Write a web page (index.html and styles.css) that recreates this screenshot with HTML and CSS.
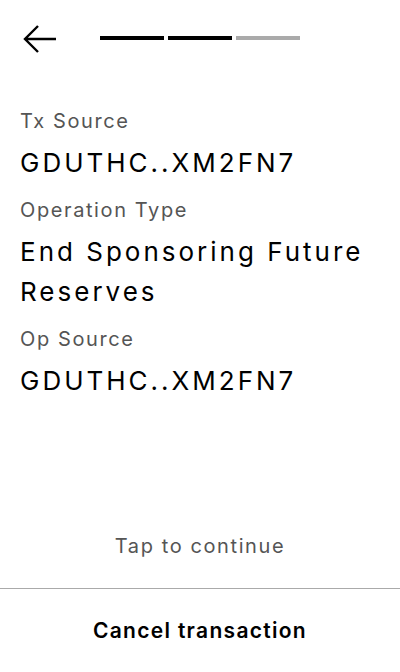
FILE: index.html
```html
<!DOCTYPE html>
<html>
<head>
<meta charset="utf-8">
<link rel="stylesheet" href="styles.css">
</head>
<body>
<div class="screen">
  <header class="header">
    <svg class="back" width="34" height="30" viewBox="0 0 34 30">
      <path d="M33 14H3M15 1L2 14L15 27" fill="none" stroke="#000" stroke-width="2.4"/>
    </svg>
    <div class="progress">
      <span class="seg on"></span>
      <span class="seg on"></span>
      <span class="seg"></span>
    </div>
  </header>
  <main class="content">
    <div class="label">Tx Source</div>
    <div class="value">GDUTHC..XM2FN7</div>
    <div class="label">Operation Type</div>
    <div class="value">End Sponsoring Future Reserves</div>
    <div class="label">Op Source</div>
    <div class="value">GDUTHC..XM2FN7</div>
  </main>
  <div class="tap">Tap to continue</div>
  <div class="cancel">Cancel transaction</div>
</div>
</body>
</html>
```
FILE: styles.css
```css
html, body {
  margin: 0;
  padding: 0;
  background: #fff;
}
.screen {
  width: 400px;
  height: 672px;
  display: flex;
  flex-direction: column;
  font-family: "Inter", "Noto Sans", sans-serif;
  color: #000;
}
.header {
  position: relative;
  height: 78px;
  box-sizing: border-box;
  padding-top: 36px;
  display: flex;
  align-items: flex-start;
  justify-content: center;
}
.back {
  position: absolute;
  left: 23px;
  top: 25px;
}
.progress {
  display: flex;
  gap: 4px;
}
.seg {
  width: 64px;
  height: 4px;
  background: #aaa;
}
.seg.on {
  background: #000;
}
.content {
  flex: 1;
  padding: 29px 20px 0;
}
.label {
  font-size: 20px;
  line-height: 28px;
  letter-spacing: 1.6px;
  color: #555;
  margin-bottom: 8px;
}
.value {
  font-size: 26px;
  line-height: 40px;
  letter-spacing: 3px;
  margin-bottom: 13px;
}
.tap {
  text-align: center;
  font-size: 20px;
  letter-spacing: 1.6px;
  color: #555;
  line-height: 28px;
  margin-bottom: 28px;
}
.cancel {
  border-top: 1px solid #aaa;
  height: 83px;
  display: flex;
  align-items: center;
  justify-content: center;
  font-size: 21px;
  font-weight: 600;
  letter-spacing: 1.3px;
}
```
